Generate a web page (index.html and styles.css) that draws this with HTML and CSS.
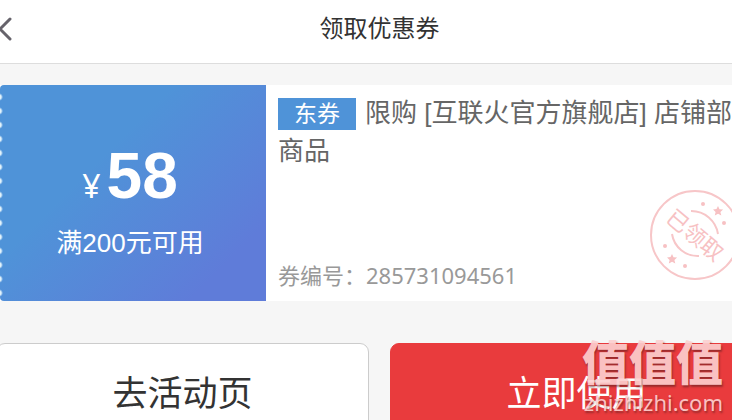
FILE: index.html
```html
<!DOCTYPE html>
<html lang="zh-CN">
<head>
  <meta charset="UTF-8">
  <meta name="viewport" content="width=device-width, initial-scale=1.0">
  <title>领取优惠券</title>
  <link rel="stylesheet" href="styles.css">
</head>
<body>
<div class="page">
  <header class="header">
    <button class="back" type="button" aria-label="返回">
      <svg width="16" height="28" viewBox="0 0 16 28"><path d="M14 4 4 14 14 24" fill="none" stroke="#66636b" stroke-width="3" stroke-linecap="round"/></svg>
    </button>
    <h1>领取优惠券</h1>
  </header>

  <section class="coupon">
    <div class="coupon-price">
      <p class="amount"><span class="yen">¥</span><strong>58</strong></p>
      <p class="limit">满200元可用</p>
    </div>
    <div class="coupon-info">
      <p class="coupon-title"><span class="tag">东券</span>限购 [互联火官方旗舰店] 店铺部分商品</p>
      <p class="coupon-no">券编号：<span>285731094561</span></p>
      <!-- received stamp -->
      <svg class="stamp" width="92" height="92" viewBox="0 0 92 92">
        <g fill="none" stroke="#f7c6c8" stroke-width="2">
          <circle cx="46" cy="46" r="44"/>
          <path d="M42 22A27 27 0 0 1 69 45"/>
          <path d="M23 45A26 26 0 0 0 50 67"/>
        </g>
        <g fill="#f7c1c3">
          <path id="star" d="m69 17 1.500 3.200 3.600.3-2.700 2.500.9 3.600-3.200-1.800-3.300 1.700.8-3.500-2.600-2.500 3.500-.4z"/>
          <use href="#star" x="-46" y="48"/>
          <circle cx="54" cy="15" r="2"/>
          <circle cx="75" cy="34" r="2"/>
          <circle cx="16" cy="57" r="2"/>
          <circle cx="36" cy="77" r="2"/>
          <text x="46" y="54" text-anchor="middle" transform="rotate(40 46 46)">已领取</text>
        </g>
      </svg>
    </div>
  </section>

  <div class="actions">
    <button class="btn" type="button">去活动页</button>
    <button class="btn btn-primary" type="button">立即使用</button>
  </div>
</div>

<div class="watermark">
  <b>值值值</b>
  <span>zhizhizhi.com</span>
</div>
</body>
</html>
```
FILE: styles.css
```css
* {
  box-sizing: border-box;
}
body {
  margin: 0;
  overflow: hidden;
  background: #f6f6f6;
  color: #333;
  font-family: "Noto Sans CJK SC", sans-serif;
}
h1, p {
  margin: 0;
}
button {
  font-family: inherit;
  color: inherit;
}
/* the page runs a little past both sides of the window */
.page {
  margin: 0 -31px 0 -4px;
}
.header {
  display: grid;
  grid-template-columns: 40px 1fr 40px;
  align-items: center;
  height: 64px;
  padding-bottom: 10px;
  background: #fff;
  border-bottom: 1px solid #ddd;
}
.header h1 {
  font-size: 24px;
  line-height: 36px;
  font-weight: 400;
  text-align: center;
}
.back {
  display: flex;
  padding: 4px 0 0;
  border: 0;
  background: none;
}
.coupon {
  display: flex;
  height: 216px;
  margin: 21px 0 42px 4px;
  background: #fff;
}
.coupon-price {
  flex: 0 0 266px;
  padding: 55px 6px 0 0;
  border-radius: 4px 0 0 4px;
  color: #fff;
  text-align: center;
  /* row of punched holes on the left edge */
  background:
    radial-gradient(circle at -1px 7px, #e4f4fb 2px, transparent 4px) 0 5px / 14px 14px repeat-y,
    linear-gradient(135deg, #4f93d8 36%, #5f7cd9 84%);
}
.amount {
  display: flex;
  justify-content: center;
  align-items: baseline;
  gap: 6px;
  height: 72px;
  font-family: "Liberation Sans", sans-serif;
  font-size: 64px;
  line-height: 72px;
}
.yen {
  font-family: "Noto Sans", sans-serif;
  font-size: 32px;
}
.limit {
  margin-top: 12px;
  font-family: "Liberation Sans", "Noto Sans CJK SC", sans-serif;
  font-size: 26px;
  line-height: 38px;
}
.coupon-info {
  position: relative;
  flex: 1;
  display: flex;
  flex-direction: column;
  justify-content: space-between;
  padding: 9px 0 9px 12px;
  color: #666;
}
.coupon-title {
  font-family: "Liberation Sans", "Noto Sans CJK SC", sans-serif;
  font-size: 26px;
  line-height: 38px;
}
.tag {
  display: inline-block;
  margin-right: 9px;
  padding: 0 16px;
  background: #4f93d8;
  color: #fff;
  font-size: 23px;
  line-height: 32px;
}
.coupon-no {
  color: #999;
  font-size: 22px;
  line-height: 34px;
}
.coupon-no span {
  font-family: "Noto Sans", sans-serif;
}
.stamp {
  position: absolute;
  right: 22px;
  top: 104px;
  font-size: 22px;
}
.actions {
  display: grid;
  grid-template-columns: 1fr 1fr;
  gap: 21px;
}
.btn {
  padding: 21px 0;
  border: 1px solid #ccc;
  border-radius: 9px;
  background: #fff;
  font-size: 35px;
  line-height: 52px;
}
.btn-primary {
  border-color: #e93b3d;
  background: #e93b3d;
  color: #fff;
}
.watermark {
  position: absolute;
  right: 9px;
  bottom: 5px;
  display: flex;
  flex-direction: column;
  align-items: flex-end;
  color: #fcd0d0;
  opacity: 0.9;
  text-shadow: 1px 2px 2px rgba(80, 30, 30, 0.6);
  pointer-events: none;
}
.watermark b {
  font-size: 47px;
  font-weight: 900;
  line-height: 58px;
}
.watermark span {
  font-family: "Noto Sans", sans-serif;
  font-size: 22px;
  line-height: 26px;
}
```
